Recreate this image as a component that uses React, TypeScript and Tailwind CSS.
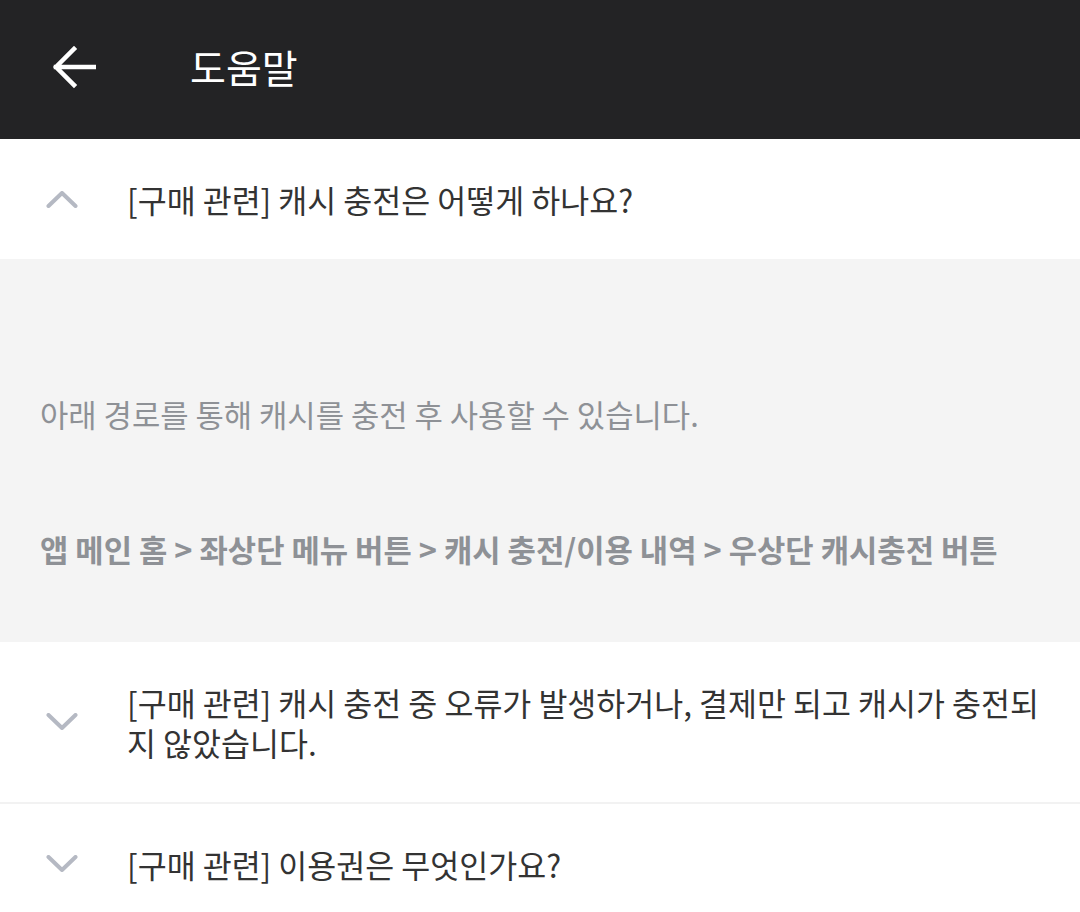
import React from "react";

const font = { fontFamily: '"Noto Sans CJK KR", "Noto Sans", sans-serif' };

function Chevron({ up }: { up?: boolean }) {
  return (
    <svg width="32" height="18" viewBox="0 0 32 18" className="shrink-0" style={{ filter: "blur(0.6px)" }}>
      {up ? (
        <path d="M2.5 16 L16 3 L29.5 16" fill="none" stroke="#b5b9c3" strokeWidth="4" strokeLinecap="round" strokeLinejoin="round" />
      ) : (
        <path d="M2.5 2 L16 15 L29.5 2" fill="none" stroke="#b5b9c3" strokeWidth="4" strokeLinecap="round" strokeLinejoin="round" />
      )}
    </svg>
  );
}

function Row({ text, up, border }: { text: string; up?: boolean; border?: boolean }) {
  return (
    <div className={`flex items-center bg-white py-[40px] pr-[30px] ${border ? "border-b-2 border-[#f2f2f2]" : ""}`}>
      <div className="w-[127px] flex pl-[46px] shrink-0">
        <Chevron up={up} />
      </div>
      <div className="text-[31.5px] leading-[40px] text-[#333333]">{text}</div>
    </div>
  );
}

export default function App() {
  return (
    <div className="w-[1080px] h-[912px] overflow-hidden bg-white" style={font}>
      <div className="h-[139px] bg-[#232325] flex items-center">
        <div className="w-[190px] pl-[52px] pb-[6px] flex">
          <svg width="44" height="44" viewBox="0 0 44 44">
            <path d="M42 22 H4 M22 4 L4 22 L22 40" fill="none" stroke="#ffffff" strokeWidth="4.5" strokeLinecap="square" />
          </svg>
        </div>
        <div className="text-[39px] text-white pb-[6px]">도움말</div>
      </div>
      <Row text="[구매 관련] 캐시 충전은 어떻게 하나요?" up />
      <div className="bg-[#f4f4f4] pl-[40px] pt-[135px] pb-[73px] text-[30.8px] leading-[40px] text-[#8e9196]">
        <div>아래 경로를 통해 캐시를 충전 후 사용할 수 있습니다.</div>
        <div className="mt-[95px] font-bold">앱 메인 홈 &gt; 좌상단 메뉴 버튼 &gt; 캐시 충전/이용 내역 &gt; 우상단 캐시충전 버튼</div>
      </div>
      <Row text="[구매 관련] 캐시 충전 중 오류가 발생하거나, 결제만 되고 캐시가 충전되지 않았습니다." border />
      <Row text="[구매 관련] 이용권은 무엇인가요?" />
    </div>
  );
}
